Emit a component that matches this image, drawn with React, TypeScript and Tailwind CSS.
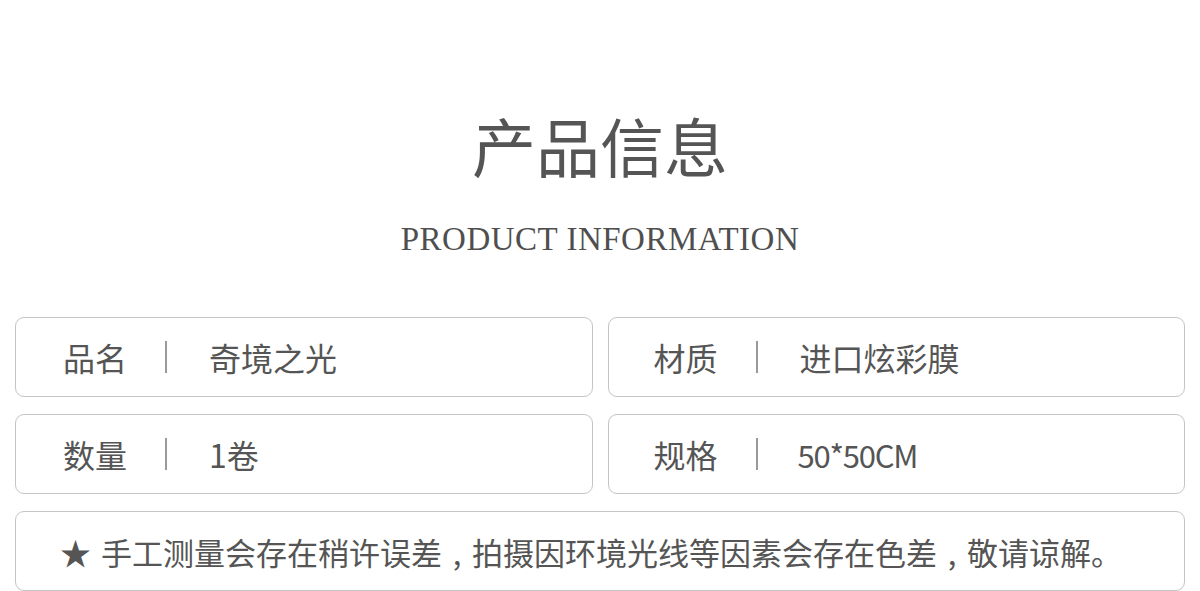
import React from "react";

const cjk = { fontFamily: '"Noto Sans CJK SC", "Noto Sans", sans-serif' };

function Row({ label, value, tight, right }: { label: string; value: string; tight?: boolean; right?: boolean }) {
  return (
    <div
      className={
        right
          ? "flex h-[80px] items-center rounded-[9px] border border-[#c4c4c4] bg-white pl-[45px]"
          : "flex h-[80px] items-center rounded-[9px] border border-[#c4c4c4] bg-white pl-[47px]"
      }
    >
      <div className="w-[102px] text-[32px] leading-none text-[#555555]">{label}</div>
      <div className="h-[32px] w-[2px] bg-[#9a9a9a]" />
      <div
        className={
          tight
            ? "ml-[40px] text-[31px] leading-none tracking-[-1.2px] text-[#555555]"
            : "ml-[42px] text-[32px] leading-none text-[#555555]"
        }
      >
        {value}
      </div>
    </div>
  );
}

function Comma() {
  return <span className="inline-block w-[30px] text-center">,</span>;
}

export default function App() {
  return (
    <div className="h-[591px] w-[1200px] overflow-hidden bg-white" style={cjk}>
      <div className="flex flex-col items-center pt-[104px]">
        <h1 className="text-[64px] font-normal leading-[80px] text-[#555555]">产品信息</h1>
        <div
          className="mt-[35px] text-[33px] leading-[40px] tracking-[0.5px] text-[#4f4f4f]"
          style={{ fontFamily: '"Liberation Serif", "DejaVu Serif", serif' }}
        >
          PRODUCT INFORMATION
        </div>
      </div>
      <div className="mt-[58px] grid grid-cols-2 gap-x-[15px] gap-y-[17px] px-[15px]">
        <Row label="品名" value="奇境之光" />
        <Row label="材质" value="进口炫彩膜" right />
        <Row label="数量" value="1卷" />
        <Row label="规格" value="50*50CM" tight right />
        <div className="col-span-2 flex h-[80px] items-center rounded-[9px] border border-[#c4c4c4] pl-[44px] text-[31px] leading-none text-[#555555]">
          <span className="mr-[10px]">★</span>
          <span>
            手工测量会存在稍许误差<Comma />拍摄因环境光线等因素会存在色差<Comma />敬请谅解。
          </span>
        </div>
      </div>
    </div>
  );
}
